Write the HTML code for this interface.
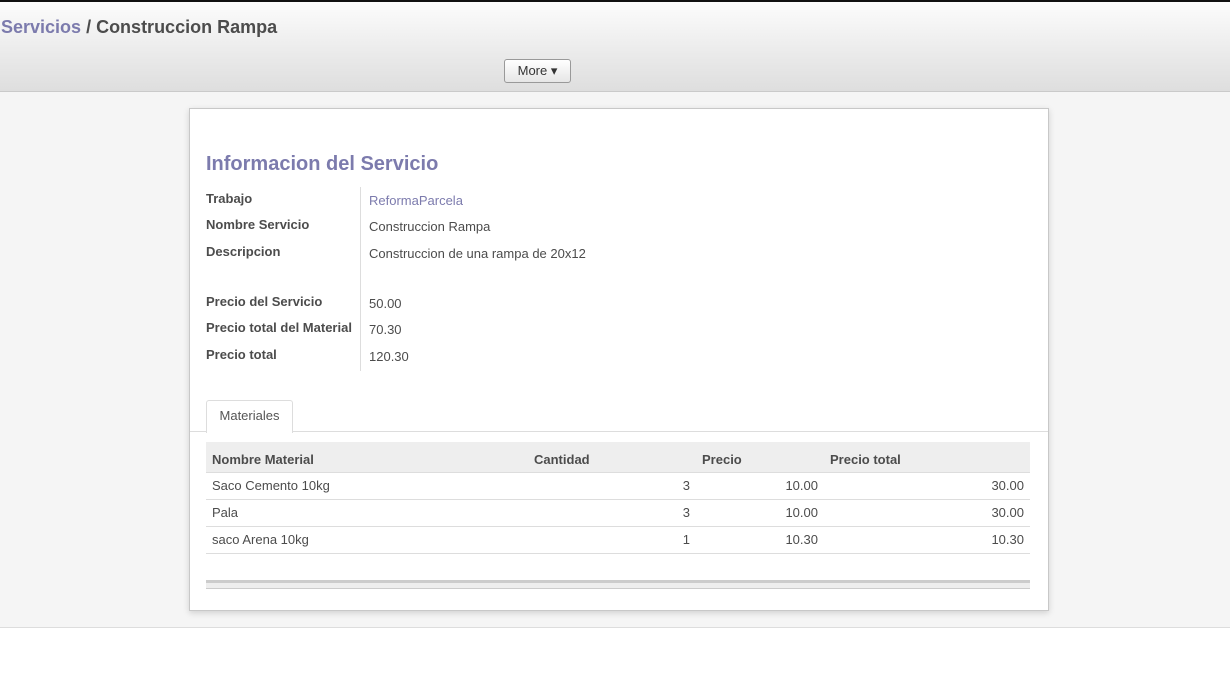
<!DOCTYPE html>
<html><head><style>
*{box-sizing:border-box;margin:0;padding:0}
body{width:1230px;height:685px;background:#fff;font-family:"Liberation Sans",sans-serif;font-size:13px;color:#4c4c4c;position:relative;overflow:hidden}
.top{position:absolute;left:0;top:0;width:1230px;height:92px;background:linear-gradient(#fcfcfc,#dedede);border-top:2px solid #111;border-bottom:1px solid #cacaca}
.bc{position:absolute;left:1px;top:15px;font-size:18px;font-weight:bold;color:#4c4c4c}
.bc a{color:#7c7bad}
.more{position:absolute;left:504px;top:57px;width:67px;height:24px;border:1px solid #999;border-radius:3px;background:linear-gradient(#fff,#e6e6e6);font-size:13px;color:#333;text-align:center;line-height:22px}
.bg{position:absolute;left:0;top:92px;width:1230px;height:536px;background:#f5f5f5;border-bottom:1px solid #ddd}
.sheet{position:absolute;left:189px;top:108px;width:860px;height:503px;background:#fff;border:1px solid #c8c8c8;box-shadow:0 2px 6px rgba(0,0,0,.15)}
h1{position:absolute;left:16px;top:44px;font-size:20px;color:#7c7bad;font-weight:bold}
.lab{position:absolute;left:16px;font-weight:bold;color:#4c4c4c}
.val{position:absolute;left:179px}
.vl{position:absolute;left:170px;top:78px;width:1px;height:184px;background:#ddd}
.tab{position:absolute;left:16px;top:291px;width:87px;height:33px;border:1px solid #ddd;border-bottom:none;border-radius:3px 3px 0 0;background:#fff;text-align:center;line-height:30px;color:#555}
.tl{position:absolute;left:0;top:322px;width:858px;height:1px;background:#ddd}
table{position:absolute;left:16px;top:333px;width:824px;border-collapse:collapse}
th{background:#eee;height:30px;text-align:left;padding:6px 6px 0;font-weight:bold;border-bottom:1px solid #ddd}
td{height:27px;padding:0 6px;border-bottom:1px solid #ddd}
.r{text-align:right}
.foot{position:absolute;left:16px;top:471px;width:824px;height:9px;border-top:3px solid #ccc;border-bottom:1px solid #ccc;background:#eee}
</style></head><body>
<div class="top"><div class="bc"><a>Servicios</a> / Construccion Rampa</div><div class="more">More ▾</div></div>
<div class="bg"></div>
<div class="sheet">
<h1>Informacion del Servicio</h1>
<div class="vl"></div>
<div class="lab" style="top:82px">Trabajo</div><div class="val" style="top:84px;color:#7c7bad">ReformaParcela</div>
<div class="lab" style="top:108px">Nombre Servicio</div><div class="val" style="top:110px">Construccion Rampa</div>
<div class="lab" style="top:135px">Descripcion</div><div class="val" style="top:137px">Construccion de una rampa de 20x12</div>
<div class="lab" style="top:185px">Precio del Servicio</div><div class="val" style="top:187px">50.00</div>
<div class="lab" style="top:211px">Precio total del Material</div><div class="val" style="top:213px">70.30</div>
<div class="lab" style="top:238px">Precio total</div><div class="val" style="top:240px">120.30</div>
<div class="tl"></div>
<div class="tab">Materiales</div>
<table>
<tr><th style="width:322px">Nombre Material</th><th style="width:168px">Cantidad</th><th style="width:128px">Precio</th><th>Precio total</th></tr>
<tr><td>Saco Cemento 10kg</td><td class="r">3</td><td class="r">10.00</td><td class="r">30.00</td></tr>
<tr><td>Pala</td><td class="r">3</td><td class="r">10.00</td><td class="r">30.00</td></tr>
<tr><td>saco Arena 10kg</td><td class="r">1</td><td class="r">10.30</td><td class="r">10.30</td></tr>
</table>
<div class="foot"></div>
</div>
</body></html>
